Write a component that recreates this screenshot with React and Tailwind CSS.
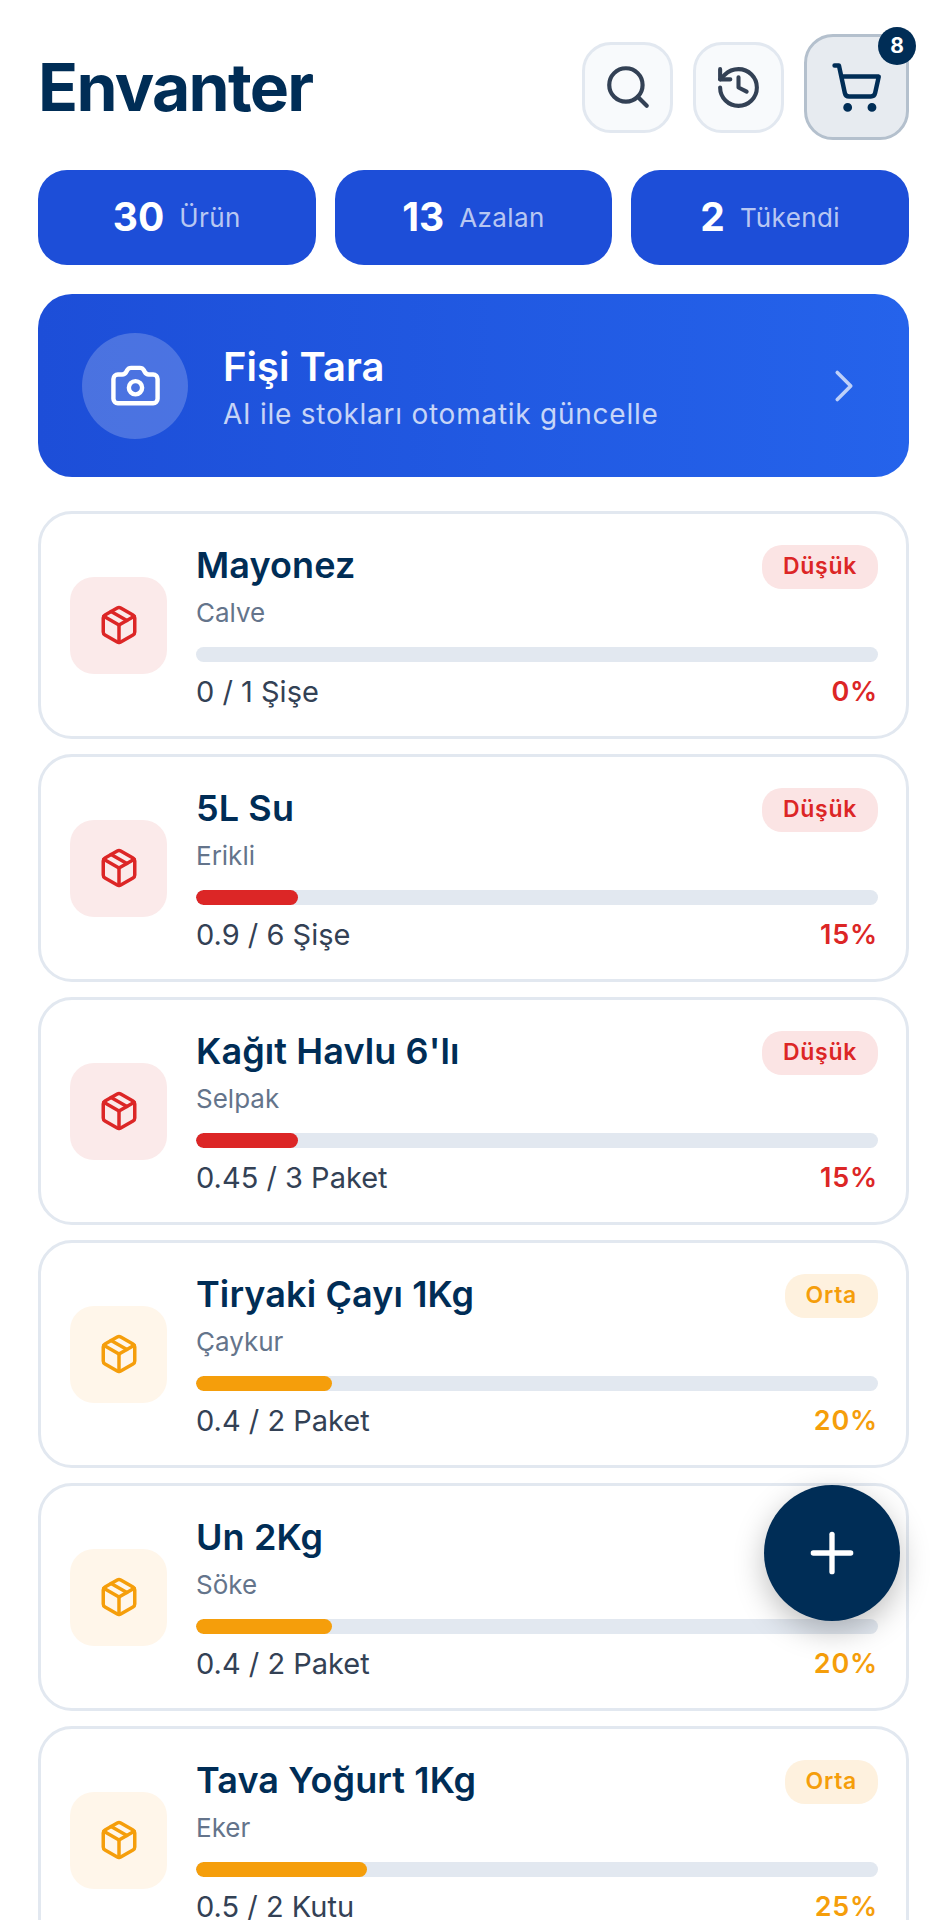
import { Search, History, ShoppingCart, Camera, ChevronRight, Package, Plus } from "lucide-react";

const items = [
  { name: "Mayonez", brand: "Calve", stock: "0 / 1 Şişe", pct: 0, level: "Düşük" },
  { name: "5L Su", brand: "Erikli", stock: "0.9 / 6 Şişe", pct: 15, level: "Düşük" },
  { name: "Kağıt Havlu 6'lı", brand: "Selpak", stock: "0.45 / 3 Paket", pct: 15, level: "Düşük" },
  { name: "Tiryaki Çayı 1Kg", brand: "Çaykur", stock: "0.4 / 2 Paket", pct: 20, level: "Orta" },
  { name: "Un 2Kg", brand: "Söke", stock: "0.4 / 2 Paket", pct: 20, level: "Orta" },
  { name: "Tava Yoğurt 1Kg", brand: "Eker", stock: "0.5 / 2 Kutu", pct: 25, level: "Orta" },
];

const stats = [
  { value: "30", label: "Ürün" },
  { value: "13", label: "Azalan" },
  { value: "2", label: "Tükendi" },
];

function ItemCard({ item }) {
  const low = item.level === "Düşük";
  return (
    <div className="flex items-center gap-[29px] h-[228px] shrink-0 rounded-[34px] border-[3px] border-[#e2e8f0] bg-white pl-[29px] pr-[28px]">
      <div className={`flex items-center justify-center w-[97px] h-[97px] shrink-0 rounded-[24px] ${low ? "bg-[#fbeaea]" : "bg-[#fff6ea]"}`}>
        <Package size={42} strokeWidth={2} className={`-mt-[1px] ${low ? "text-[#dc2626]" : "text-[#f59e0b]"}`} />
      </div>
      <div className="flex-1 min-w-0 pt-[3px]">
        <div className="flex items-start justify-between h-[50px]">
          <span className="text-[36px] leading-[46px] font-semibold tracking-[0.1px] text-[#002d56]">{item.name}</span>
          <span className={`flex items-center h-[44px] mt-[3px] px-[21px] rounded-[20px] text-[23px] font-semibold tracking-[0.7px] ${low ? "bg-[#fbe4e4] text-[#dc2626]" : "bg-[#fef1de] text-[#f59e0b]"}`}>
            {item.level}
          </span>
        </div>
        <p className="mt-[3px] text-[26px] leading-[36px] text-[#64748b]">{item.brand}</p>
        <div className="mt-[16px] h-[15px] rounded-full bg-[#e2e8f0] overflow-hidden">
          <div className={`h-full rounded-full ${low ? "bg-[#dc2626]" : "bg-[#f59e0b]"}`} style={{ width: `${item.pct}%` }} />
        </div>
        <div className="flex items-center justify-between mt-[10px]">
          <span className="text-[29px] leading-[40px] text-[#334155]">{item.stock}</span>
          <span className={`text-[27px] leading-[40px] font-semibold tracking-[0.8px] ${low ? "text-[#dc2626]" : "text-[#f59e0b]"}`}>{item.pct}%</span>
        </div>
      </div>
    </div>
  );
}

export default function App() {
  return (
    <div className="relative h-[1920px] overflow-hidden bg-white pl-[38px] pr-[39px] font-['Inter',sans-serif]">
      <header className="flex items-center justify-between h-[170px] pt-[4px]">
        <h1 className="text-[66px] font-bold tracking-[-1.7px] text-[#002d56]">Envanter</h1>
        <div className="flex items-center gap-[20px]">
          <button className="flex items-center justify-center w-[91px] h-[91px] rounded-[29px] border-[3px] border-[#e2e8f0] bg-[#f8fafc] text-[#334155]">
            <Search size={50} strokeWidth={2} />
          </button>
          <button className="flex items-center justify-center w-[91px] h-[91px] rounded-[29px] border-[3px] border-[#e2e8f0] bg-[#f8fafc] text-[#334155]">
            <History size={49} strokeWidth={2} />
          </button>
          <button className="relative flex items-center justify-center w-[105px] h-[106px] rounded-[29px] border-[3px] border-[#b4c0cd] bg-[#e7ebf0] text-[#002d56]">
            <ShoppingCart size={53} strokeWidth={2} />
            <span className="absolute -top-[10px] -right-[10px] flex items-center justify-center w-[38px] h-[38px] rounded-full bg-[#002d56] text-[21px] font-bold text-white">8</span>
          </button>
        </div>
      </header>

      <div className="grid grid-cols-3 gap-[19px]">
        {stats.map((s) => (
          <div key={s.label} className="flex items-center justify-center gap-[15px] h-[95px] rounded-[29px] bg-[#1d4ed8]">
            <span className="text-[39px] font-bold text-white">{s.value}</span>
            <span className="text-[26px] tracking-[0.4px] text-white/70">{s.label}</span>
          </div>
        ))}
      </div>

      <div className="flex items-center h-[183px] mt-[29px] pl-[44px] pr-[38px] rounded-[34px] bg-gradient-to-r from-[#1d4ed8] to-[#2563eb]">
        <div className="flex items-center justify-center w-[106px] h-[106px] shrink-0 rounded-full bg-white/20 text-white">
          <Camera size={53} strokeWidth={2} />
        </div>
        <div className="flex-1 ml-[35px] pt-[5px]">
          <p className="text-[40px] leading-[48px] font-semibold text-white">Fişi Tara</p>
          <p className="mt-[4px] text-[28px] leading-[38px] tracking-[0.75px] text-white/75">AI ile stokları otomatik güncelle</p>
        </div>
        <ChevronRight size={54} strokeWidth={1.6} className="text-white/70" />
      </div>

      <div className="flex flex-col gap-[15px] mt-[34px]">
        {items.map((item) => (
          <ItemCard key={item.name} item={item} />
        ))}
      </div>

      <button className="absolute left-[764px] top-[1485px] flex items-center justify-center w-[136px] h-[136px] rounded-full bg-[#002d56] text-white shadow-[0_10px_30px_rgba(0,0,0,0.25)]">
        <Plus size={64} strokeWidth={2} />
      </button>
    </div>
  );
}
